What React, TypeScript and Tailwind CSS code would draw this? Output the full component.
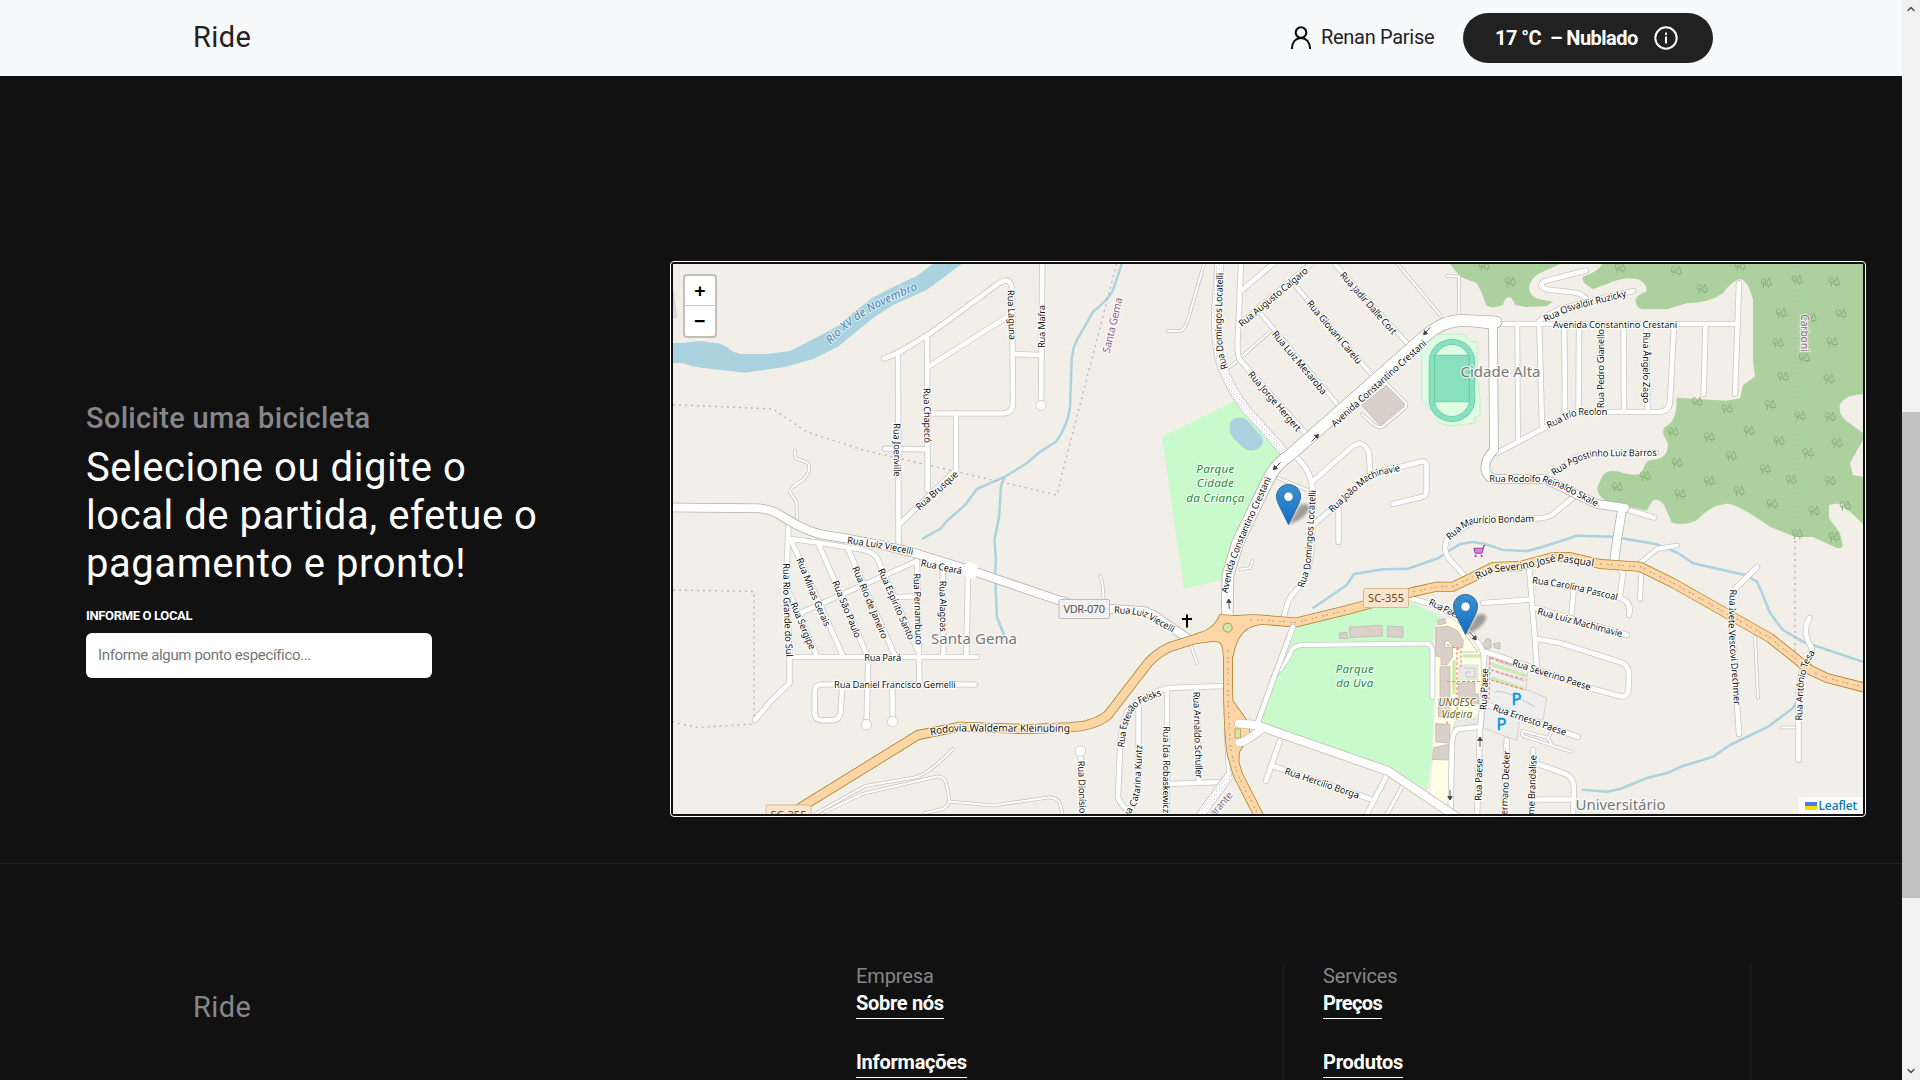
import { ChevronDown, ChevronUp, ShoppingCart } from "lucide-react";

type Road = [d: string, width?: number];
type Label = [text: string, points: number[], size?: number];

const majorRoads: Road[] = [
  ["M670 507.5L757 508.3Q770 509 778 514L795 524Q810 532 822 534.5L846 538.5L886 546L913 552.7L970 570L1060 600.7L1085 608L1112 609L1143 611Q1152 613 1165 623L1190 640", 8],
  ["M1465 321L1493 325L1494 450Q1484 460 1485.5 470Q1488 479 1497 479L1545 479L1597 504L1625 508", 8],
  ["M1622 510L1617 540L1614 563", 8],
  ["M1496 322L1463 320.5Q1444 320 1425 336L1290 455Q1275 465 1268 480L1238 542L1228 575L1227 620", 11],
];

const junctionRoads: Road[] = [
  ["M1239 723.5L1256 725L1388 771L1455 816", 8],
  ["M1239 742.5Q1246 742 1263 728", 7.5],
  ["M1293 627L1273 680L1258 722", 4.6],
];

const streets: Road[] = [
  ["M884 358.5L898 353L930 333.5L1000 282.5Q1011 276 1012 290L1013 403Q1013 413.5 1002 413.5L928 413.5"],
  ["M928 367L1010 315"], ["M927 335L927.7 490"], ["M898 352L898.5 546"], ["M885 448.7L927 449.3"],
  ["M898.5 525L956 470L956 413.5"], ["M1042.3 262L1041 405"], ["M1013 354L1042 355"],
  ["M788.5 524L787 560L787 600L789.5 657L789.5 683L770 702L755 720"],
  ["M788 538.5L817 542.5L862 549.5Q873 552 877 558L918 651"],
  ["M791 540L843 656"], ["M818 543L868 657"], ["M848 549L895 656"], ["M798 614L917 561"], ["M787 588L817 656"],
  ["M917 560L919.5 684"], ["M942.7 568L943.3 657"], ["M968 577L966.3 657"], ["M892 597.5L918 596"],
  ["M790 657L977 657"],
  ["M975 684.5L822 684.5Q814.7 685 814.7 692L814.7 713Q815 720 822 720.3L833 720.3Q839.5 720 840.5 712L842.5 686"],
  ["M868.3 657L866.5 724"], ["M892.5 686L892.5 721"], ["M1080.5 751L1082.5 816"],
  ["M1495 324L1738 324", 4.5], ["M1517.3 325L1518 440", 4], ["M1539.3 325L1542 426"], ["M1564.3 325L1565 415"],
  ["M1579 325L1578.5 413"], ["M1601 325V412", 4], ["M1623.5 325L1624 411"], ["M1646 325L1647.5 411"],
  ["M1674 325L1670 402Q1669 412 1658 412L1593 412Q1577 410 1565 417L1497 453"],
  ["M1705.5 325L1703.7 394"], ["M1739 283L1735 394"],
  ["M1539 321L1546 316L1560 309L1633 291"], ["M1586 270.5L1545 281Q1537 286 1547 289.5L1575 292.5Q1585 295 1588 302"],
  ["M1549 476L1575 458Q1585 453.5 1600 453L1656 452.5"],
  ["M1575 496L1552 515Q1545 518.5 1535 518.5L1490 519Q1470 519 1447 540Q1442 550 1450 560L1463 574"],
  ["M1625 509L1654 517.5"],
  ["M1241 264L1238.5 325Q1236 356 1240 360L1307 435"], ["M1241 291L1275 262"], ["M1239 325L1313 262"],
  ["M1260 313L1338 405", 3.5], ["M1293 283L1372 375", 3.5], ["M1333 262L1407 343", 3.8],
  ["M1297 458Q1312 472 1312.5 490L1312 540Q1310 570 1303 583Q1288 598 1287 605L1283 620"],
  ["M1313 481L1353 446Q1364 439 1369 453L1370 472"],
  ["M1312 526L1363 482Q1375 470 1400 467L1422 461.5Q1426.5 461 1426.5 467L1426.5 490Q1427 496 1420 497.5L1392.7 504"],
  ["M1338.5 507L1338.5 542"],
  ["M1224 686L1168 688Q1140 695 1127 712Q1121 725 1120 750L1118 797Q1120 805 1133 815"],
  ["M1138.5 705L1138.5 790Q1135 805 1126 816"], ["M1167 689V816"], ["M1196.5 687L1199 783"], ["M1168 784L1222 782L1229 774", 4.5],
  ["M1226 730L1228.5 774", 3],
  ["M1273 677Q1289 660 1291 651Q1295 645 1303 645L1425 643.5Q1432.5 643 1432.5 655L1432.5 697", 4],
  ["M1280 740L1266 781"], ["M1273 766L1370 799"], ["M1387 775L1366 816"], ["M1402 787L1386 816", 3],
  ["M1410 598L1440 607L1460 620Q1478 640 1483.5 653L1484.5 680L1480 730L1477 816"],
  ["M1480 726.7L1458 729Q1453 731 1452 742L1450.5 816"],
  ["M1529 566L1535 640L1537 668"], ["M1483 603L1531 599.5"], ["M1531 580L1573 588L1620 598Q1632 602 1629 615"],
  ["M1573.5 592L1571.5 613"], ["M1615 564L1623 573L1620 596"], ["M1536 608L1627 635"],
  ["M1537 639L1560 643L1620 662Q1629 665 1629 675L1628.5 690Q1627 698 1619 696L1590 688L1513 661L1485 652"],
  ["M1485 704L1578 737"], ["M1506.7 740L1504 816"], ["M1533 750L1531.5 816"],
  ["M1535 763L1566 774Q1573 778 1574 787L1573 816"], ["M1533 799.5L1573 799.5"],
  ["M1640 563L1657 549L1677 545.5", 4], ["M1641.5 570L1640 599", 4],
  ["M1757 567L1735 589Q1731 595 1732 627L1739 734"],
  ["M1809.5 618Q1801 632 1812 648Q1812 655 1802 670L1798.5 690L1798.5 760"],
];

const tracks: Road[] = [
  ["M795 451L795.5 458L808 463Q812 470 803 480Q790 487 790 492L796.5 502L797 522"],
  ["M815 814L865 786L917 777Q932 771 953 749"],
  ["M825 812L862 794L937 776.5Q944 776 946 783L949 797Q950 805 943 809L925 813"],
  ["M949 801.5L993 805.5L1048 797.5Q1062 796 1062 816"],
  ["M1204 264L1190 313Q1185 331 1180 331L1168 331"],
  ["M1375 384L1387 384L1406 403Q1407 406 1405 408L1382 427Q1378 428 1374 425L1362 414"],
  ["M1278 478L1308 490"], ["M1191 646L1197 663"], ["M1100 576Q1103 580 1103.5 600"], ["M1240 569.5L1250 568L1252.5 561"],
  ["M1396 262L1441 316"], ["M1447 276L1459 276.5L1458.7 315"], ["M1230 367L1272 330"],
  ["M1755 637L1758 698"], ["M1781.5 727.5L1798 727.5"],
  ["M1548 738L1523 731Q1520 736 1526 737L1572 752M1552 731L1548 738L1552 745"],
];

const highways = [
  "M785 818L803 806L918 735L960 726.7L1027 729L1070 727.3L1083 726Q1100 722 1108 715L1148 663Q1157 653 1170 647L1197 638.5Q1213 637 1225 626",
  "M1230 621Q1250 618 1265 620L1296 622.5L1347 610L1413 592L1437 586.7L1453 586.7L1473 577L1493 567L1520 566L1553 557L1570 557L1600 564L1640 566.7L1673 583L1770 638L1810 670L1827 678L1866 688",
  "M1228 630L1228 690Q1229 740 1232 755L1238 775L1260 818",
];
const junctions = [
  "M1196 634Q1214 630 1220 615L1237 616Q1255 616 1268 616.5V624Q1238 622 1233 656H1223.5Q1224 640 1214 641L1197 643Z",
  "M1232 700L1247 721L1250 734L1239 752L1238.500 764L1231 758Z",
];

const rivers = [
  "M1121.7 264L1113 290Q1108 300 1093 311.7L1077 340Q1071.5 350 1071.5 365L1070 408Q1067 427 1056 441.7L1040 451.7L1027 463L1005 476.7L977 489L965 505L948 520L940 529L922 539",
  "M1005 476.7Q1000 485 1000.5 495L999 517L994.5 540L996 560L995 575L997 617L1004 635",
  "M1312.7 608.3L1346.7 585L1354 574L1383 569.3L1408 568.7L1438 558.3L1460 544L1473 542L1485 544L1503 550L1527 551L1543 546.7L1577 535.7L1613 536.7L1657 544.3L1678 553L1693 563.3L1745 575L1757 581.7L1762 593L1770 613L1783 630L1803 641.7L1863 661.7",
  "M1803 677L1798 700L1793 708L1768 726.7L1730 745L1713 756.7L1683 766L1667 773L1647 778L1620 789L1607 791.7L1582 789.7",
];

const boundaries = [
  "M673 404.7L727 407L773 409L807 432L863 450L1057 495L1070 443L1117 262",
  "M673 590L754 591.5L754 724L697 727.5L673 722",
  "M1795 265V652",
];

const forests = [
  "M1450 264L1460 276.7L1476.7 283L1481.7 293L1486.7 306L1493 307.7L1503 305Q1505 297 1509 297Q1513 298 1515 305L1526.7 307L1546.7 306L1553 301.7L1538 299Q1529 296 1529 286.7Q1531 279 1538 274L1560 264Z",
  "M1601.7 264Q1601 270 1583 276.7Q1580 282 1593 289L1606.7 284Q1627 275 1640 280Q1648 285 1646 291.7Q1634 296 1635.7 302Q1637 308 1642 309L1666.7 309.3L1686.7 303.3Q1710 303 1723 293Q1733 280 1740 279Q1748 280 1753 300V360L1755 376.7L1743 385L1740 398.3L1726.7 400.7L1676.7 397.7Q1677 420 1668 425Q1661 428 1664 436L1668 444Q1668 460 1650 460Q1645 461 1642 473Q1638 476 1625 473.5Q1609 468 1603 475L1597 488Q1598 498 1610 502.7L1646.7 510.7L1653 500Q1660 499 1664 505L1672 522.7Q1684 526 1697 520Q1712 504 1728 503.7Q1737 504 1770 526.7L1795 537L1813 537L1836.7 548Q1843 549 1842.7 545L1840 533L1829 518V505Q1835 503 1842 504L1863 524V476.7L1853 475L1850 463L1863 440V433L1845 420Q1838 412 1840 405Q1844 395 1863 394.3V264Z",
];

const trees = [
  [1510, 282], [1620, 268], [1676, 271], [1702, 289], [1766, 283], [1797, 280], [1834, 282], [1781, 313], [1841, 314],
  [1811, 318], [1778, 343], [1832, 342], [1804, 358], [1783, 377], [1829, 379], [1697, 402], [1727, 409], [1770, 405],
  [1800, 416], [1830, 417], [1673, 432], [1709, 437], [1749, 431], [1779, 441], [1837, 443], [1808, 453], [1731, 456],
  [1677, 463], [1765, 469], [1791, 480], [1645, 476], [1709, 481], [1830, 481], [1617, 487], [1739, 491], [1680, 494],
  [1772, 504], [1814, 511], [1845, 506], [1797, 534], [1834, 537], [1740, 266], [1484, 266],
];

const buildings = [
  "M1339.5 633L1347 632.5L1348 638.5L1339.5 638.5Z", "M1349.3 627L1381.7 625.3L1382.7 636L1350 637.7Z", "M1387.7 626L1403 627V637.5L1387 636.7Z",
  "M1435.7 627.5L1448 626L1458 631L1463.5 641L1462.500 648L1453 647.500L1449 641L1445 641V647.5H1452.5V657L1447 665H1441V657L1435.7 656Z",
  "M1440 666.7H1450V697H1440Z", "M1438.5 698.5H1450V717H1438.5Z", "M1435.7 723.5L1450 724.5L1449.5 743L1435.7 742Z",
  "M1433.5 748L1449 744V760L1432.5 759.5Z", "M1458.5 683L1475 682.5V694H1478.500V704L1458.5 702Z", "M1437.7 620L1445 618.3L1446 623.3L1438.5 625Z",
  "M1361.7 405L1387 385.5L1405.5 403.5L1380 425.5Z", "M1482 645L1487 638L1491 640V648L1486 649Z", "M1493 644L1500 642.5V649L1495 648Z",
];

const labels: Label[] = [
  ["Rua Laguna", [1010.7, 290, 1012.3, 340]], ["Rua Mafra", [1042, 348, 1042, 305]],
  ["Rua Chapecó", [926.7, 388, 927.7, 443]], ["Rua Joenville", [896.7, 423.3, 897.3, 476.7]],
  ["Rua Brusque", [917.3, 508.3, 956.7, 472.7]],
  ["Rua Domingos Locatelli", [1225, 369.3, 1221, 357, 1218.5, 338, 1218.3, 316.7, 1220, 272.7]],
  ["Rua Augusto Calgaro", [1240, 324.7, 1306.7, 269.3]], ["Rua Jadir Dalle Cort", [1341.7, 273.3, 1395, 333.3]],
  ["Rua Giovani Carelu", [1308.7, 301.7, 1360, 362.7]], ["Rua Luiz Mesaroba", [1274, 332.3, 1325, 393.3]],
  ["Rua Jorge Hergert", [1250, 372.7, 1299.3, 430]], ["Avenida Constantino Crestani", [1332.7, 425, 1425, 341.7]],
  ["Avenida Constantino Crestani", [1224.3, 592.7, 1230, 567, 1240, 540, 1268.3, 477.3]],
  ["Rua João Machinavie", [1330, 510.7, 1350, 492, 1366.7, 477.5, 1381, 471.5, 1400, 467.7]],
  ["Rua Domingos Locatelli", [1300.7, 587.3, 1307.3, 566.7, 1310, 530, 1312.7, 490]],
  ["Rua Osvaldir Ruzicky", [1544, 319.3, 1570, 307.3, 1626, 293.3]],
  ["Avenida Constantino Crestani", [1553, 324.7, 1677.3, 324.7]], ["Rua Pedro Gianello", [1601, 408.3, 1601, 329]],
  ["Rua Ângelo Zago", [1646.3, 332.3, 1646.3, 403.3]], ["Rua Irio Reolon", [1547.3, 426, 1570, 414, 1580, 412, 1607.3, 412]],
  ["Rua Agostinho Luiz Barros", [1552.3, 473.3, 1573.3, 459.3, 1593.3, 453.3, 1656.7, 452.7]],
  ["Rua Rodolfo Reinaldo Skale", [1489.3, 479, 1543.3, 479, 1563.3, 486, 1597.7, 504]],
  ["Rua Maurício Bondam", [1447.5, 538, 1461, 526, 1473.3, 520, 1534, 518.7]],
  ["Rua Luiz Viecelli", [847.3, 540, 886.7, 546, 913.3, 551.7]], ["Rua Ceará", [921, 562.7, 962, 571.3]],
  ["Rua Rio Grande do Sul", [786.3, 563.3, 786.7, 603.3, 789.3, 656.7]],
  ["Rua Minas Gerais", [799.3, 558.3, 813.3, 593.3, 827.7, 626]], ["Rua Sergipe", [793.3, 602.7, 812.7, 649]],
  ["Rua São Paulo", [835, 581, 858.3, 637.3]], ["Rua Rio de Janeiro", [855, 566.7, 885, 638.3]],
  ["Rua Espírito Santo", [880.7, 569, 911.7, 639.3]], ["Rua Pernambuco", [916.7, 573.3, 919, 645]],
  ["Rua Alagoas", [942.7, 580.7, 943.3, 631.7]], ["Rua Pará", [864.3, 657.3, 901.3, 657.3]],
  ["Rua Daniel Francisco Gemelli", [834, 685, 955.7, 685]],
  ["Rodovia Waldemar Kleinubing", [930, 732, 945, 729, 960, 728, 1070, 728.4], 10.2],
  ["Rua Luiz Viecelli", [1114, 610, 1130, 610.5, 1145, 613.5, 1174, 630]], ["Rua Paese", [1429.3, 601.7, 1464, 618]],
  ["Rua Estevão Felsks", [1121, 747.3, 1123.3, 726.7, 1130, 710, 1138, 701, 1161, 692.3]],
  ["Rua Catarina Kuntz", [1122, 822, 1134, 802, 1137, 790, 1139, 745]],
  ["Rua Ida Robaskewicz", [1166.7, 726, 1166.7, 813.3]], ["Rua Arnaldo Schuller", [1196.3, 691.7, 1199, 778.3]],
  ["Rua Dionísio", [1081, 760.7, 1082.7, 813.3]], ["Rua Hercílio Borga", [1285, 770.7, 1359, 795.7]],
  ["Rua Paese", [1483.3, 710, 1485, 668.3]], ["Rua Paese", [1478.3, 801, 1479.3, 758.3]],
  ["Rua Severino José Pasqual", [1476, 576.7, 1490, 569.3, 1520, 566, 1540, 561.7, 1556.7, 557.5, 1594, 563], 10.2],
  ["Rua Carolina Pascoal", [1532.3, 580, 1566.7, 585, 1617.7, 597.3]],
  ["Rua Luiz Machimavie", [1537.7, 611, 1622.3, 634]], ["Rua Severino Paese", [1512.7, 662.3, 1590.7, 687.3]],
  ["Rua Ernesto Paese", [1493.3, 707.3, 1566, 732.7]], ["ermano Decker", [1504, 815, 1506.7, 750.7]],
  ["me Brandalise", [1531, 815, 1533.3, 755]],
  ["Rua Ivete Vescovi Drechmer", [1733.3, 589.3, 1731.7, 626.7, 1737.3, 705]],
  ["Rua Antônio Tesa", [1798.7, 720.7, 1800.7, 680, 1805, 663.3, 1812.5, 650.7]],
];

const districtLabels: Label[] = [
  ["Santa Gema", [1106, 352.7, 1119, 297.7], 10.5],
  ["Carboni", [1804.7, 314.3, 1804.7, 351.7], 10.5],
  ["arante", [1211.7, 815, 1230.7, 793.3], 10.5],
];

const arrows = [
  [1427, 331, 132], [1315, 438, -45], [1277, 466, 135], [1229, 604, -93], [1473, 636, 50], [1480, 742, -90], [1450, 795, 90],
];

function pathLength(p: number[]) {
  let total = 0;
  for (let i = 2; i < p.length; i += 2) total += Math.hypot(p[i] - p[i - 2], p[i + 1] - p[i - 1]);
  return total;
}

function labelPath(p: number[]) {
  let d = `M${p[0]} ${p[1]}`;
  for (let i = 2; i < p.length; i += 2) d += `L${p[i]} ${p[i + 1]}`;
  const n = p.length;
  const dx = p[n - 2] - p[n - 4];
  const dy = p[n - 1] - p[n - 3];
  const h = Math.hypot(dx, dy);
  return `${d}L${p[n - 2] + (dx / h) * 8} ${p[n - 1] + (dy / h) * 8}`;
}

function RoadLabels({ items, prefix, className }: { items: Label[]; prefix: string; className: string }) {
  return (
    <g className={className} strokeWidth="2.4" strokeLinejoin="round" style={{ paintOrder: "stroke" }}>
      {items.map(([text, points, size = 9.5], i) => (
        <g key={i}>
          <path id={`${prefix}${i}`} d={labelPath(points)} fill="none" stroke="none" />
          <text fontSize={size} dy={size * 0.34} textLength={pathLength(points)}>
            <textPath href={`#${prefix}${i}`} textLength={pathLength(points)}>{text}</textPath>
          </text>
        </g>
      ))}
    </g>
  );
}

function Roads({ items, fallback, casing }: { items: Road[]; fallback: number; casing: string }) {
  return (
    <g fill="none" strokeLinecap="round" strokeLinejoin="round">
      <g className={casing}>
        {items.map(([d, w = fallback], i) => <path key={i} d={d} strokeWidth={w + 1.6} />)}
      </g>
      <g stroke="#fff">
        {items.map(([d, w = fallback], i) => <path key={i} d={d} strokeWidth={w} />)}
      </g>
    </g>
  );
}

function Shield({ x, y, w, text, grey }: { x: number; y: number; w: number; text: string; grey?: boolean }) {
  return (
    <g>
      <rect x={x} y={y} width={w} height="19" rx="1.5" fill={grey ? "#f1f1f1" : "#f9e5cf"} stroke={grey ? "#bcbcbc" : "#d9b98c"} />
      <text x={x + w / 2} y={y + 13.6} textAnchor="middle" fontSize="11" textLength={w - 9} fill={grey ? "#555" : "#6b4a12"}>{text}</text>
    </g>
  );
}

function Marker({ x, y }: { x: number; y: number }) {
  return (
    <g transform={`translate(${x} ${y})`}>
      <path d="M12.5 41L24 21Q34 18 33 25Q30 34 12.5 41Z" fill="#000" opacity=".34" filter="url(#soft)" />
      <path d="M.5 12.6C.5 5.5 6 .5 12.5 .5S24.500 5.500 24.500 12.600C24.500 15.500 23.500 18 22.300 20.500L12.500 40.500L2.700 20.500C1.500 18 .5 15.500 .5 12.600Z" fill="url(#pin)" stroke="#2e6c97" />
      <circle cx="12.500" cy="12.700" r="4.600" fill="#fff" stroke="#2e6c97" strokeWidth=".6" />
    </g>
  );
}

function MapCanvas() {
  return (
    <svg className="block h-[550px] w-[1190px] font-['Noto_Sans',sans-serif]" viewBox="673 264 1190 550">
      <defs>
        <linearGradient id="pin" x1="0" y1="0" x2="0" y2="1">
          <stop offset="0" stopColor="#3d8fce" />
          <stop offset="1" stopColor="#126fc6" />
        </linearGradient>
        <filter id="soft"><feGaussianBlur stdDeviation="1.600" /></filter>
        <pattern id="gravel" width="5" height="5" patternUnits="userSpaceOnUse">
          <rect width="5" height="5" fill="#fff" />
          <path d="M1 1h1M3.500 2h1M1.500 3.500h1M4 4.500h1" stroke="#c9bcc9" strokeWidth=".9" />
        </pattern>
        <g id="tree" fill="none" stroke="#8cb27c" strokeWidth="1">
          <ellipse cx="-2.600" cy="-1.300" rx="2.200" ry="3" />
          <path d="M-2.600 -1V5M2.800 -5L0 2.500H5.500Z M2.800 2V5" />
        </g>
        <path id="arrow" d="M-5 0H2M1.500 -2.200L5 0L1.500 2.200Z" fill="#444" stroke="#444" strokeWidth=".9" />
      </defs>
      <rect x="673" y="264" width="1190" height="550" fill="#f2efe9" />
      <path d="M673 290L676.500 317L673 318Z" fill="#ead9ea" stroke="#d3b6d3" strokeWidth=".7" />
      <g fill="#add19e">{forests.map((d) => <path key={d} d={d} />)}</g>
      {trees.map(([x, y], i) => <use key={i} href="#tree" x={x} y={y} />)}
      <path d="M1162 436.700L1235 400.700L1285 455L1268 477L1222 580L1184 589Z" fill="#c8facc" />
      <path d="M1297 626.700L1365 608L1409 601.700L1441 616L1433 630L1434 697L1431.700 760L1427 790L1390 768L1258 725L1277 677Z" fill="#c8facc" />
      <path d="M1230 423Q1234 416 1243 418Q1248 420 1253 427L1262 437Q1265 444 1259 448Q1252 453 1245 449L1234 439Q1228 432 1230 423Z" fill="#aad3df" />
      <path d="M1436.700 626.700L1442 620L1455 618L1468 630L1483 657L1483 710L1455 730L1450 807L1430 793L1433 760L1435 700Z" fill="#ffffe5" />
      <path d="M1490 657L1528 670L1526 689L1546.700 698L1543 720L1520 715L1517 740.700L1483 728Z" fill="#eee" stroke="#dcc3bb" strokeWidth=".8" />
      <path d="M1459 665H1478V680H1459ZM1455 722L1462 719H1480V724L1453 728Z" fill="#e9e9e9" stroke="#d6d6d6" strokeWidth=".7" />
      <path d="M1463 656H1483M1491 664L1526 676M1491 678L1524 689M1454 660V694" fill="none" stroke="#cdebb0" strokeWidth="3.500" />
      <path d="M1464 668H1475V677H1466V672H1471M1462 652L1478 652M1466 636L1478 652M1496 672L1524 681M1496 661L1524 670M1495 692Q1505 689 1535 707" fill="none" stroke="#c6c6c6" strokeWidth="1" />
      <path d="M1421.700 347L1436.700 334.700L1463 334L1470 341.700L1477.300 341.700L1477.300 375L1480 400L1480 415L1475 418L1475 423L1452 426L1438 423L1433 412L1421.700 400Z" fill="#dffce2" stroke="#b3f3b9" strokeWidth=".8" />
      <rect x="1431.700" y="342" width="40.500" height="77" rx="20" fill="none" stroke="#66c9a2" strokeWidth="6" />
      <rect x="1431.700" y="342" width="40.500" height="77" rx="20" fill="none" stroke="#88e0be" strokeWidth="4.600" />
      <rect x="1434.500" y="355.300" width="34.500" height="46.500" fill="#88e0be" stroke="#66c9a2" strokeWidth=".9" />
      <path d="M673 343L680 343L701.700 341L720 343.700L726.700 346.700L733 351.700L740 354L766.700 354L790 351L813 339.300L841.700 324L853 313L871.700 298L893 287L916.700 276L933 264L961.700 264L926.700 290L893 305L873 318L838 346.700L813 359L785 367L745 372.700L703 368L691.700 366L681.700 363L673 363Z" fill="#aad3df" />
      <g fill="none" stroke="#aad3df" strokeWidth="2.500" strokeLinejoin="round">{rivers.map((d) => <path key={d} d={d} />)}</g>
      <g fill="#d9d0c9" stroke="#c2b3a9" strokeWidth=".7">{buildings.map((d) => <path key={d} d={d} />)}</g>
      <g fill="none" stroke="#c4abcb" strokeWidth="1.400" strokeDasharray="2 4">{boundaries.map((d) => <path key={d} d={d} />)}</g>

      <Roads items={tracks} fallback={2} casing="stroke-[#c8c6c2]" />
      <Roads items={streets} fallback={4.6} casing="stroke-[#c9c8c5]" />
      <path d="M1219.500 262L1216 310Q1215 350 1222 366Q1235 400 1257 421L1285 453M1200 816L1229 776" fill="none" stroke="#c9c8c5" strokeWidth="9.500" />
      <path d="M1219.500 262L1216 310Q1215 350 1222 366Q1235 400 1257 421L1285 453M1200 816L1229 776" fill="none" stroke="url(#gravel)" strokeWidth="8" />
      <Roads items={majorRoads} fallback={8} casing="stroke-[#b2b1ae]" />
      <g fill="#fff" stroke="#c9c8c5" strokeWidth=".8">
        <circle cx="1041" cy="405.500" r="5" /><circle cx="866.500" cy="724.500" r="5.200" /><circle cx="892.500" cy="721.500" r="5.200" /><circle cx="1080.300" cy="751" r="5.200" />
      </g>
      <circle cx="970.500" cy="570.500" r="8" fill="#fff" />
      <g fill="none" stroke="#ad832c" strokeLinejoin="round">
        {highways.map((d) => <path key={d} d={d} strokeWidth="10" />)}
        {junctions.map((d) => <path key={d} d={d} strokeWidth="1.600" />)}
        <circle cx="1227.700" cy="626.500" r="11" strokeWidth="1.600" />
      </g>
      <g fill="none" stroke="#fcd6a4" strokeLinejoin="round">
        {highways.map((d) => <path key={d} d={d} strokeWidth="8.400" />)}
        {junctions.map((d) => <path key={d} d={d} fill="#fcd6a4" stroke="none" />)}
      </g>
      <circle cx="1227.700" cy="626.500" r="11" fill="#fcd6a4" />
      <circle cx="1227.700" cy="627.700" r="4.500" fill="#cdebb0" stroke="#ad832c" strokeWidth=".8" />
      <Roads items={junctionRoads} fallback={8} casing="stroke-[#c4c1ba]" />
      <rect x="1235" y="729" width="5.500" height="9" fill="#cdebb0" stroke="#ad832c" strokeWidth=".6" />
      <path d="M1250 620L1265 620L1296 622.500L1347 610M1413 592L1437 586.700L1453 586.700L1473 577M1600 564L1640 566.700L1673 583L1770 638L1800 662M1815 673L1827 678L1863 687M1228 650L1228 690Q1229 740 1232 755L1238 775L1258 814" fill="none" stroke="#c49f9f" strokeWidth="1.200" strokeDasharray="2 5 2 2" />
      <path d="M1457 647V722M1447 681.500H1482M1447 645L1461 650V667M1490 657L1489 700M1491 670L1526 680M1491 658L1512 665M1491 680L1526 690M1447 716V726" fill="none" stroke="#fa8577" strokeWidth="1.200" strokeDasharray="3 2" />
      {arrows.map(([x, y, a], i) => <use key={i} href="#arrow" transform={`translate(${x} ${y}) rotate(${a})`} />)}

      <RoadLabels items={labels} prefix="street" className="fill-[#111] stroke-white/85" />
      <RoadLabels items={districtLabels} prefix="district" className="fill-[#8d618b] stroke-white/70" />
      <g className="fill-[#4d80b3] stroke-white/60 italic" strokeWidth="2" style={{ paintOrder: "stroke" }}>
        <path id="rio" d="M827.700 341.700L842 327L858 315L876 304L895 295L925 282" fill="none" stroke="none" />
        <text fontSize="11.500" dy="4"><textPath href="#rio" textLength="106">Rio XV de Novembro</textPath></text>
      </g>
      <g className="stroke-white/70" strokeWidth="2.500" textAnchor="middle" style={{ paintOrder: "stroke" }}>
        <g className="fill-[#777]" fontSize="15">
          <text x="1500.500" y="376.700" textLength="80">Cidade Alta</text>
          <text x="974" y="644" textLength="86">Santa Gema</text>
          <text x="1620.500" y="810" textLength="90">Universitário</text>
        </g>
        <g className="fill-[#2c8a3c] italic" fontSize="11.500">
          <text x="1215.300" y="473" textLength="38">Parque</text>
          <text x="1215.300" y="487.300" textLength="37">Cidade</text>
          <text x="1215.300" y="501.500" textLength="58">da Criança</text>
          <text x="1354.700" y="673" textLength="38">Parque</text>
          <text x="1354.700" y="687.300" textLength="37">da Uva</text>
        </g>
        <g className="fill-[#66661a] italic" fontSize="10">
          <text x="1457" y="705.500" textLength="37">UNOESC</text>
          <text x="1457" y="717.500" textLength="31">Videira</text>
        </g>
      </g>
      <g className="fill-[#0092da]" stroke="#0092da" strokeWidth=".4" fontSize="16.500" textAnchor="middle">
        <text x="1516.500" y="705">P</text>
        <text x="1501.500" y="730">P</text>
      </g>
      <path d="M1187 614.500V627.500M1182 619H1192" stroke="#000" strokeWidth="2" />
      <ShoppingCart x="1472.500" y="544.500" width="14" height="13" color="#ac39ac" fill="#d08ad0" strokeWidth={2} transform="translate(2959 0) scale(-1 1)" />
      <Shield x={1059} y={599.5} w={50.5} text="VDR-070" grey />
      <Shield x={1363.5} y={588.5} w={45} text="SC-355" />
      <Shield x={766} y={805} w={45} text="SC-355" />
      <Marker x={1276} y={484} />
      <Marker x={1453} y={594} />
    </svg>
  );
}

function UserIcon() {
  return (
    <svg className="h-6 w-6" viewBox="0 0 24 24" fill="none" stroke="#0a0a0a" strokeWidth="2.100">
      <circle cx="12" cy="6.500" r="5.300" />
      <path d="M2.800 23C3.200 16.300 6.800 12 12 12S20.800 16.300 21.200 23" />
    </svg>
  );
}

function InfoIcon() {
  return (
    <svg className="h-6 w-6" viewBox="0 0 24 24" fill="none" stroke="#fff" strokeWidth="2">
      <circle cx="12" cy="12" r="10.700" />
      <path d="M12 10.500V17.500M12 6.500V9" />
    </svg>
  );
}

function FooterColumn({ title, links }: { title: string; links: { text: string; spacing: string }[] }) {
  return (
    <div className="mr-[39px] h-[118px] w-[428px] border-r border-[#1e1e1e]">
      <div className="text-[20px] leading-[28px] tracking-[-0.1px] text-[#86868a]">{title}</div>
      <div className="flex flex-col items-start gap-[29px]">
        {links.map((l) => (
          <a key={l.text} className={`h-[29px] border-b border-white text-[20px] leading-[27px] font-bold whitespace-nowrap text-white first:mb-px ${l.spacing}`}>
            {l.text}
          </a>
        ))}
      </div>
    </div>
  );
}

export default function App() {
  return (
    <div className="flex h-[1080px] w-[1920px] overflow-hidden bg-[#111] font-['Roboto',sans-serif]">
      <div className="flex w-[1902px] flex-col">
        <header className="flex h-[76px] items-center justify-between bg-[#f8f9fb] pr-[189px] pl-[193px]">
          <span className="-mt-px text-[29px] leading-none tracking-[0.4px] text-[#222]">Ride</span>
          <div className="flex items-center">
            <UserIcon />
            <span className="mb-[2px] ml-[8px] w-[142px] text-[20px] tracking-[-0.3px] whitespace-nowrap text-[#222]">Renan Parise</span>
            <div className="flex h-[50px] w-[250px] items-center rounded-full bg-[#212121] pl-8 text-[20px] font-bold text-white">
              <span className="w-[159px] tracking-[-0.55px] whitespace-pre">17 °C  – Nublado</span>
              <InfoIcon />
            </div>
          </div>
        </header>

        <main className="flex h-[788px] border-b border-[#222]">
          <section className="w-[670px] pt-[322px] pl-[86px]">
            <h2 className="text-[29px] leading-[40px] font-medium tracking-[0.32px] text-[#86868a]">Solicite uma bicicleta</h2>
            <h1 className="mt-[6px] text-[40px] leading-[48px] tracking-[0.55px] whitespace-nowrap text-white">
              Selecione ou digite o<br />local de partida, efetue o<br />pagamento e pronto!
            </h1>
            <label className="mt-[18px] block text-[13px] leading-[20px] font-bold tracking-[-0.35px] text-white">INFORME O LOCAL</label>
            <input className="mt-[7px] block h-[45px] w-[346px] rounded-md bg-white px-[12px] pb-[2px] text-[15px] tracking-[-0.35px] placeholder:text-[#777]" placeholder="Informe algum ponto específico..." />
          </section>
          <section className="pt-[185px]">
            <div className="relative h-[556px] w-[1196px] rounded border border-white p-[2px]">
              <MapCanvas />
              <div className="absolute top-[12px] left-[12px] flex flex-col rounded border-2 border-black/20 bg-white bg-clip-padding text-center font-['DejaVu_Sans_Mono',monospace] text-[18px] font-bold text-black">
                <span className="h-[30px] w-[30px] border-b border-[#ccc] leading-[29px]">+</span>
                <span className="h-[30px] w-[30px] leading-[29px]">−</span>
              </div>
              <div className="absolute right-[2px] bottom-[2px] flex h-[17px] items-center gap-[2px] bg-white/80 px-[6px] font-['Noto_Sans',sans-serif] text-[12px] font-medium tracking-[-0.1px] text-[#0078a8]">
                <span className="flex h-2 w-3 flex-col bg-[#4c7be1] pt-1"><span className="h-1 bg-[#ffd500]" /></span>
                Leaflet
              </div>
            </div>
          </section>
        </main>

        <footer className="flex grow pt-[98px] pl-[193px]">
          <div className="w-[663px] pt-[31px] text-[29px] leading-[29px] tracking-[0.4px] text-[#86868a]">Ride</div>
          <FooterColumn title="Empresa" links={[{ text: "Sobre nós", spacing: "tracking-[-0.3px]" }, { text: "Informações", spacing: "tracking-[-0.25px]" }]} />
          <FooterColumn title="Services" links={[{ text: "Preços", spacing: "tracking-[-0.6px]" }, { text: "Produtos", spacing: "tracking-[-0.2px]" }]} />
        </footer>
      </div>
      <div className="flex w-[18px] flex-col items-center bg-[#f1f1f1] text-[#505050]">
        <ChevronUp size={12} strokeWidth={3} className="mt-[3px]" />
        <div className="mt-[397px] h-[486px] w-full bg-[#c1c1c1]" />
        <ChevronDown size={12} strokeWidth={3} className="mt-auto mb-[3px]" />
      </div>
    </div>
  );
}
